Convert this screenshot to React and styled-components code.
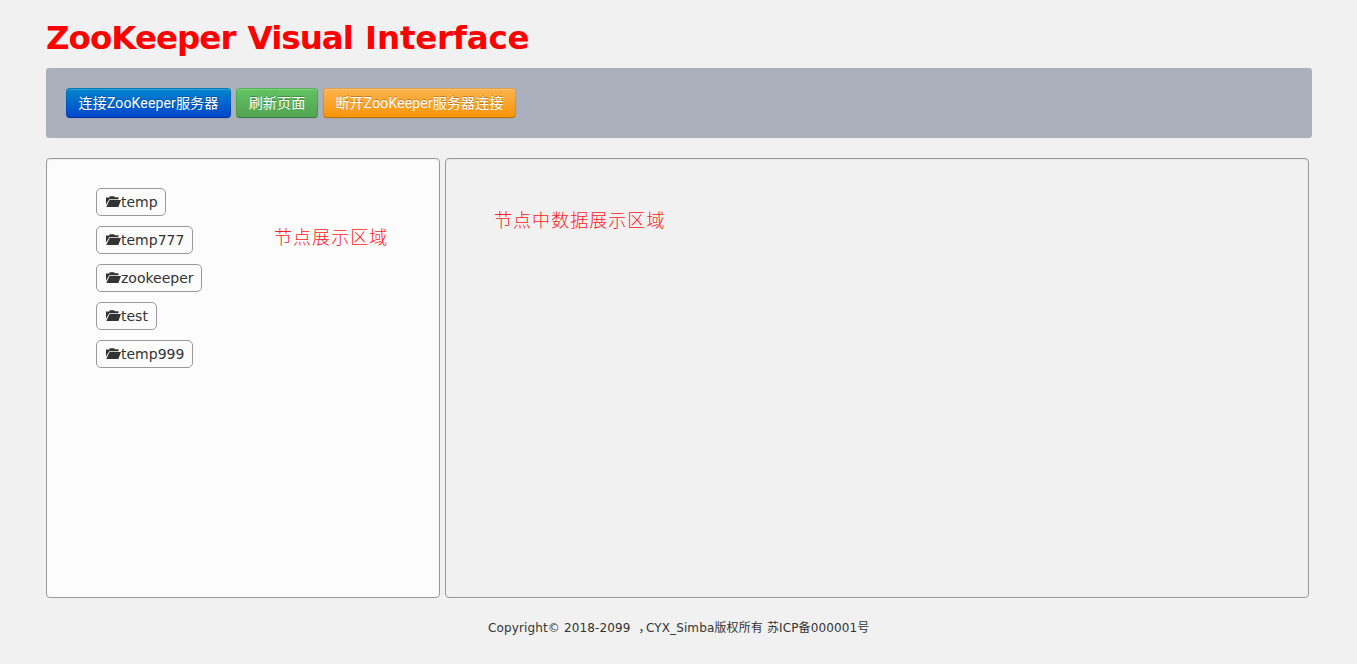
import React from "react";
import styled, { createGlobalStyle } from "styled-components";

const GlobalStyle = createGlobalStyle`
  * { box-sizing: border-box; }
  body {
    margin: 0;
    background: #f1f1f1;
    color: #333;
    font-family: Verdana, "DejaVu Sans", "Noto Sans CJK SC", sans-serif;
  }
`;

const Page = styled.div`
  width: 1357px;
  height: 664px;
  padding: 18px 45px 0 46px;
  overflow: hidden;
`;

const Title = styled.h1`
  margin: 0 0 10px;
  height: 40px;
  font-size: 32.5px;
  line-height: 40px;
  font-weight: 700;
  color: #f00;
  white-space: nowrap;
  letter-spacing: -0.98px;
  word-spacing: 1.8px;
`;

const WideWord = styled.span`
  letter-spacing: -0.22px;
`;

const Toolbar = styled.div`
  display: flex;
  gap: 5px;
  height: 70px;
  padding: 20px;
  border-radius: 3px;
  background: #aab1bd;
`;

const palettes = {
  primary: { from: "#0088cc", to: "#0044cc", text: "#fff" },
  success: { from: "#62c462", to: "#51a351", text: "#fff" },
  warning: { from: "#fbb450", to: "#f89406", text: "#fff" },
};

const Button = styled.button`
  width: ${(p) => p.$width}px;
  height: 30px;
  padding: 0;
  border: 1px solid;
  border-color: rgba(0, 0, 0, 0.1) rgba(0, 0, 0, 0.1) rgba(0, 0, 0, 0.25);
  border-radius: 4px;
  background: linear-gradient(${(p) => palettes[p.$tone].from}, ${(p) => palettes[p.$tone].to}) border-box;
  box-shadow: inset 0 1px 0 rgba(255, 255, 255, 0.2), 0 1px 2px rgba(0, 0, 0, 0.05);
  color: ${(p) => palettes[p.$tone].text};
  font: 14px/20px Roboto, "Noto Sans CJK SC", sans-serif;
  letter-spacing: 0.15px;
  text-shadow: 0 -1px 0 rgba(0, 0, 0, 0.25);
  white-space: nowrap;
`;

const Panels = styled.main`
  display: flex;
  gap: 5px;
  margin-top: 20px;
  height: 440px;
`;

const Panel = styled.section`
  display: flex;
  flex: none;
  width: ${(p) => p.$width}px;
  border: 1px solid #999;
  border-radius: 4px;
  background: ${(p) => p.$fill};
  box-shadow: inset 0 1px 1px rgba(0, 0, 0, 0.05);
`;

const NodeList = styled.ul`
  display: flex;
  flex-direction: column;
  align-items: flex-start;
  gap: 10px;
  width: 227px;
  margin: 0;
  padding: 29px 0 0 49px;
  list-style: none;
`;

const Node = styled.li`
  display: flex;
  align-items: center;
  width: ${(p) => p.$width}px;
  height: 28px;
  padding-left: 9px;
  border: 1px solid #999;
  border-radius: 5px;
  font-size: 14px;
  line-height: 20px;
  white-space: nowrap;
`;

const FolderSvg = styled.svg`
  flex: none;
  width: 15px;
  height: 12px;
`;

const Note = styled.p`
  margin: ${(p) => p.$top}px 0 0 ${(p) => p.$left}px;
  color: #ff2020;
  font: 300 18px/26px "Noto Sans CJK SC", sans-serif;
  letter-spacing: 1.05px;
  white-space: nowrap;
`;

const Footer = styled.footer`
  margin-top: 20px;
  padding-left: 442px;
  font-size: 12px;
  line-height: 20px;
  letter-spacing: 0.13px;
  white-space: pre;
`;

const Comma = styled.span`
  margin: 0 1.5px 0 4px;
  letter-spacing: 0;
  font-feature-settings: "halt";
`;

const FolderIcon = () => (
  <FolderSvg viewBox="0 0 15 12" fill="#333" aria-hidden="true">
    <path d="M0 1.5H3.5V0.3H8L9 1.2H12.5V3.2H3.2L0 8.8Z" />
    <path d="M3.6 4.1H15L12.4 11H0.3Z" />
  </FolderSvg>
);

const nodes = [
  { name: "temp", width: 70 },
  { name: "temp777", width: 97 },
  { name: "zookeeper", width: 106 },
  { name: "test", width: 61 },
  { name: "temp999", width: 97 },
];

export default function App() {
  return (
    <Page>
      <GlobalStyle />
      <Title>
        ZooKeeper Visual <WideWord>Interface</WideWord>
      </Title>
      <Toolbar>
        <Button $tone="primary" $width={165}>连接ZooKeeper服务器</Button>
        <Button $tone="success" $width={82}>刷新页面</Button>
        <Button $tone="warning" $width={193}>断开ZooKeeper服务器连接</Button>
      </Toolbar>
      <Panels>
        <Panel $width={394} $fill="#fcfcfc">
          <NodeList>
            {nodes.map((node) => (
              <Node key={node.name} $width={node.width}>
                <FolderIcon />
                {node.name}
              </Node>
            ))}
          </NodeList>
          <Note $top={64} $left={0}>节点展示区域</Note>
        </Panel>
        <Panel $width={864} $fill="#f1f1f1">
          <Note $top={47} $left={48}>节点中数据展示区域</Note>
        </Panel>
      </Panels>
      <Footer>
        Copyright© 2018-2099 <Comma>，</Comma>CYX_Simba版权所有 苏ICP备000001号
      </Footer>
    </Page>
  );
}
